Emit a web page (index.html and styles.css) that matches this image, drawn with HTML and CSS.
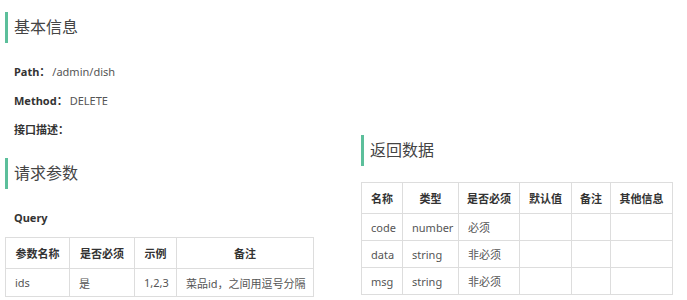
FILE: index.html
```html
<!DOCTYPE html>
<html lang="zh-CN">
<head>
  <meta charset="UTF-8">
  <title>接口文档 - 删除菜品</title>
  <link rel="stylesheet" href="styles.css">
</head>
<body>
  <div class="page">
    <div class="col-left">
      <h2 class="title first">基本信息</h2>
      <p class="info"><b>Path：</b><span class="path">/admin/dish</span></p>
      <p class="info"><b>Method：</b><span class="method">DELETE</span></p>
      <p class="info"><b>接口描述：</b></p>

      <h2 class="title second">请求参数</h2>
      <p class="sub">Query</p>
      <table class="grid query">
        <thead>
          <tr><th>参数名称</th><th>是否必须</th><th>示例</th><th>备注</th></tr>
        </thead>
        <tbody>
          <tr><td>ids</td><td>是</td><td>1,2,3</td><td>菜品id，之间用逗号分隔</td></tr>
        </tbody>
      </table>
    </div>

    <div class="col-right">
      <h2 class="title">返回数据</h2>
      <table class="grid result">
        <thead>
          <tr><th>名称</th><th>类型</th><th>是否必须</th><th>默认值</th><th>备注</th><th>其他信息</th></tr>
        </thead>
        <tbody>
          <tr><td>code</td><td>number</td><td>必须</td><td></td><td></td><td></td></tr>
          <tr><td>data</td><td>string</td><td>非必须</td><td></td><td></td><td></td></tr>
          <tr><td>msg</td><td>string</td><td>非必须</td><td></td><td></td><td></td></tr>
        </tbody>
      </table>
    </div>
  </div>
</body>
</html>
```

FILE: styles.css
```css
body {
  margin: 0;
  background: #fff;
  color: #555;
  font-family: "Noto Sans", "Noto Sans CJK SC", sans-serif;
  font-size: 11px;
}

.page {
  display: flex;
  padding-left: 5px;
}

.col-left {
  width: 309px;
}

.col-right {
  margin-left: 47px;
  padding-top: 135px;
}

/* section headings with the green bar */
.title {
  margin: 0;
  height: 31px;
  line-height: 31px;
  padding-left: 6px;
  border-left: 3px solid #5cbf9b;
  font-size: 16px;
  font-weight: normal;
  color: #444;
}

.title.first {
  margin-top: 12px;
  margin-bottom: 14px;
}

.title.second {
  margin-top: 14px;
}

.info {
  margin: 0;
  height: 29px;
  line-height: 29px;
  padding-left: 9px;
}

.info b {
  color: #333;
}

.path {
  margin-left: 2px;
}

.method {
  margin-left: 2px;
}

.sub {
  margin: 19px 0 0;
  padding-left: 9px;
  height: 20px;
  line-height: 20px;
  font-weight: bold;
  color: #333;
}

.grid {
  border-collapse: collapse;
  table-layout: fixed;
}

.query {
  margin-top: 9px;
  width: 309px;
}

.result {
  margin-top: 16px;
  width: 312px;
}

.grid th, .grid td {
  border: 1px solid #ddd;
  white-space: nowrap;
  overflow: hidden;
}

.grid th {
  height: 30px;
  padding: 0;
  text-align: center;
  color: #333;
  font-weight: bold;
}

.grid td {
  height: 27px;
  padding: 0 0 0 9px;
  text-align: left;
}

.result td {
  height: 26px;
}

.query th:nth-child(1) { width: 63px; }
.query th:nth-child(2) { width: 64px; }
.query th:nth-child(3) { width: 41px; }

.result th:nth-child(1) { width: 40px; }
.result th:nth-child(2) { width: 55px; }
.result th:nth-child(3) { width: 60px; }
.result th:nth-child(4) { width: 51px; }
.result th:nth-child(5) { width: 38px; }
```
